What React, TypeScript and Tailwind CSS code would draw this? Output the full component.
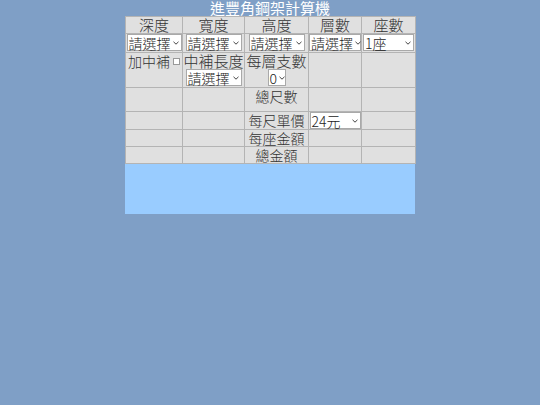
import React from "react";

const font = { fontFamily: '"Noto Sans CJK TC", "Noto Sans", sans-serif' };

function Select({ label, width }: { label: string; width: string }) {
  return (
    <div
      className={`mx-auto flex items-center justify-between bg-white border border-[#a9a9a9] h-[17px] pl-[1px] pr-[2px] text-[14px] leading-none text-[#222] ${width}`}
    >
      <span className="whitespace-nowrap">{label}</span>
      <svg width="6" height="4" viewBox="0 0 6 4" className="shrink-0 ml-[2px]">
        <path d="M0.5 0.8 L3 3.2 L5.5 0.8" fill="none" stroke="#444" strokeWidth="1" />
      </svg>
    </div>
  );
}

const cell = "border border-[#b4b4b4] p-0 text-center align-top text-[14px] leading-[16px] font-light text-[#333] whitespace-nowrap";

export default function App() {
  return (
    <div className="min-h-[405px] w-full bg-[#7f9fc6]" style={font}>
      <div className="w-[290px] mx-auto">
        <h1 className="h-[16px] text-center text-white text-[15px] leading-[16px] font-normal">
          進豐角鋼架計算機
        </h1>
        <table className="w-[290px] table-fixed border-collapse bg-[#e0e0e0]">
          <colgroup>
            <col className="w-[57px]" />
            <col className="w-[62px]" />
            <col className="w-[64px]" />
            <col className="w-[53px]" />
            <col className="w-[54px]" />
          </colgroup>
          <tbody>
            <tr className="h-[16px]">
              <td className={`${cell} text-[15px]`}>深度</td>
              <td className={`${cell} text-[15px]`}>寬度</td>
              <td className={`${cell} text-[15px]`}>高度</td>
              <td className={`${cell} text-[15px]`}>層數</td>
              <td className={`${cell} text-[15px]`}>座數</td>
            </tr>
            <tr className="h-[19px]">
              <td className={`${cell} align-middle`}>
                <Select label="請選擇" width="w-[55px]" />
              </td>
              <td className={`${cell} align-middle`}>
                <Select label="請選擇" width="w-[56px]" />
              </td>
              <td className={`${cell} align-middle`}>
                <Select label="請選擇" width="w-[56px]" />
              </td>
              <td className={`${cell} align-middle`}>
                <Select label="請選擇" width="w-[52px]" />
              </td>
              <td className={`${cell} align-middle`}>
                <Select label="1座" width="w-[51px]" />
              </td>
            </tr>
            <tr className="h-[35px]">
              <td className={`${cell} text-left pl-[2px]`}>
                <span className="inline-flex items-center gap-[3px]">
                  加中補
                  <span className="inline-block w-[7px] h-[7px] border border-[#999] bg-white" />
                </span>
              </td>
              <td className={`${cell} text-[15px]`}>
                <div>中補長度</div>
                <Select label="請選擇" width="w-[56px]" />
              </td>
              <td className={`${cell} text-[15px]`}>
                <div>每層支數</div>
                <Select label="0" width="w-[18px]" />
              </td>
              <td className={cell}></td>
              <td className={cell}></td>
            </tr>
            <tr className="h-[24px]">
              <td className={cell}></td>
              <td className={cell}></td>
              <td className={cell}>總尺數</td>
              <td className={cell}></td>
              <td className={cell}></td>
            </tr>
            <tr className="h-[18px]">
              <td className={cell}></td>
              <td className={cell}></td>
              <td className={`${cell} align-middle`}>每尺單價</td>
              <td className={`${cell} align-middle`}>
                <Select label="24元" width="w-[51px]" />
              </td>
              <td className={cell}></td>
            </tr>
            <tr className="h-[17px]">
              <td className={cell}></td>
              <td className={cell}></td>
              <td className={cell}>每座金額</td>
              <td className={cell}></td>
              <td className={cell}></td>
            </tr>
            <tr className="h-[15px]">
              <td className={cell}></td>
              <td className={cell}></td>
              <td className={cell}>總金額</td>
              <td className={cell}></td>
              <td className={cell}></td>
            </tr>
          </tbody>
        </table>
        <div className="h-[50px] bg-[#99ccff]" />
      </div>
    </div>
  );
}
